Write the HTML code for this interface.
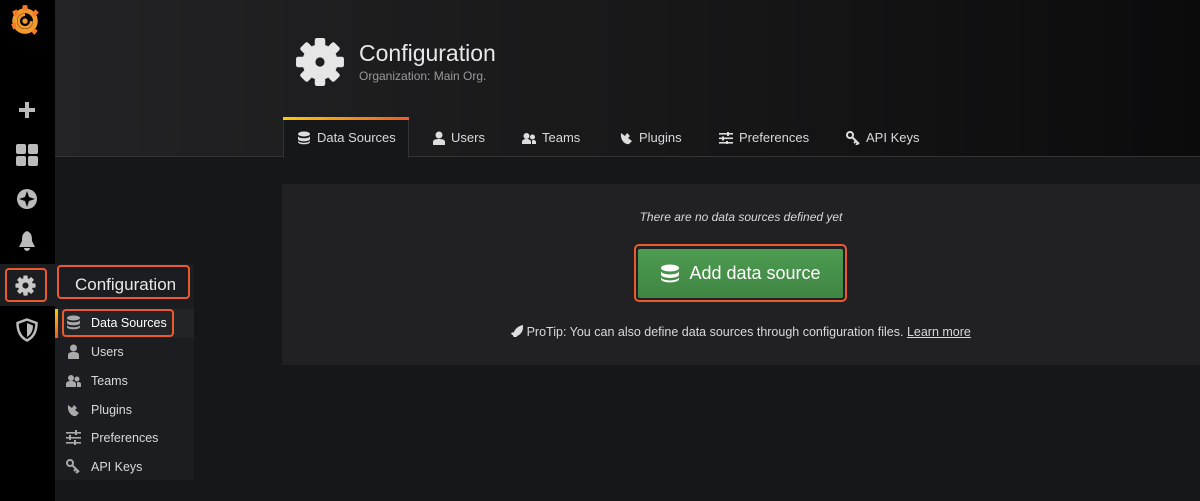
<!DOCTYPE html>
<html><head><style>
*{margin:0;padding:0;box-sizing:border-box}
body{width:1200px;height:501px;overflow:hidden;background:#161719;font-family:"Liberation Sans",sans-serif;position:relative;color:#d8d9da}
.abs{position:absolute}
.side{left:0;top:0;width:55px;height:501px;background:#000}
.head{left:55px;top:0;width:1145px;height:157px;background:linear-gradient(90deg,#232325,#161617 60%,#0b0b0c);border-bottom:1px solid #333}
.tab{top:130px;font-size:13px;color:#d8d9da;display:flex;align-items:center;gap:6px}
.panel{left:282px;top:184px;width:918px;height:181px;background:#212124}
.menu{left:55px;top:264px;width:139px;height:216px;background:#1c1d20}
.mi{left:66px;font-size:12.5px;color:#d8d9da;display:flex;align-items:center;gap:10px}
.box{border:2px solid #eb5a2d;border-radius:4px}
</style></head><body>
<svg width="0" height="0" style="position:absolute"><defs>
<g id="gear"><circle cx="12" cy="12" r="8.5"/><g><rect x="9.5" y="0.5" width="5" height="23" rx="1"/><rect x="9.5" y="0.5" width="5" height="23" rx="1" transform="rotate(45 12 12)"/><rect x="9.5" y="0.5" width="5" height="23" rx="1" transform="rotate(90 12 12)"/><rect x="9.5" y="0.5" width="5" height="23" rx="1" transform="rotate(135 12 12)"/></g></g>
</defs></svg>
<div class="abs side"></div>
<div class="abs head"></div>
<!-- logo -->
<svg class="abs" style="left:8px;top:3px" width="34" height="34" viewBox="0 0 32 32"><circle cx="16" cy="17" r="12" fill="#f2992e"/><g fill="#f47a2a"><path d="M14 2l4 0 1 5-6 0z"/><path d="M26 6l3 3-4 4-3-3z"/><path d="M4 8l4-2 2 5-4 2z"/><path d="M3 20l4-2 1 5-3 2z"/><path d="M25 24l3 2-3 4-3-3z"/></g><circle cx="16" cy="17" r="7.5" fill="#000"/><path d="M16 11a6 6 0 1 0 6 6" fill="none" stroke="#f2992e" stroke-width="2.5"/><circle cx="16" cy="17" r="2.5" fill="#f2992e"/></svg>
<!-- sidebar icons -->
<svg class="abs" style="left:17px;top:100px" width="20" height="20"><rect x="8" y="2" width="4" height="16" fill="#bbb"/><rect x="2" y="8" width="16" height="4" fill="#bbb"/></svg>
<svg class="abs" style="left:15px;top:143px" width="24" height="24"><g fill="#bbb"><rect x="1" y="1" width="10" height="10" rx="2"/><rect x="13" y="1" width="10" height="10" rx="2"/><rect x="1" y="13" width="10" height="10" rx="2"/><rect x="13" y="13" width="10" height="10" rx="2"/></g></svg>
<svg class="abs" style="left:16px;top:188px" width="22" height="22"><circle cx="11" cy="11" r="10" fill="#bbb"/><path d="M11 3L13 9L19 11L13 13L11 19L9 13L3 11L9 9Z" fill="#000"/></svg>
<svg class="abs" style="left:17px;top:230px" width="20" height="22"><path d="M10 1C5 3 5 7 5 11L2 17H18L15 11C15 7 15 3 10 1Z M7 18A3 3 0 0 0 13 18Z" fill="#bbb"/></svg>
<div class="abs" style="left:0;top:264px;width:55px;height:42px;background:#1c1d20"></div>
<div class="abs box" style="left:5px;top:268px;width:42px;height:34px"></div>
<svg class="abs" style="left:15px;top:275px" width="21" height="21" viewBox="0 0 24 24"><use href="#gear" fill="#c8c8c8"/><circle cx="12" cy="12" r="3.5" fill="#1c1d20"/></svg>
<svg class="abs" style="left:16px;top:318px" width="22" height="24" viewBox="0 0 22 24"><path d="M11 1.5L20.5 5C20.5 14 17 19.5 11 22.5C5 19.5 1.5 14 1.5 5Z" fill="none" stroke="#bbb" stroke-width="2.5"/><path d="M11 5L17 7.5C17 14 14 17 11 19Z" fill="#bbb"/></svg>
<!-- menu -->
<div class="abs menu"></div>
<div class="abs box" style="left:57px;top:265px;width:133px;height:34px"></div>
<div class="abs" style="left:75px;top:275px;font-size:17px;color:#e8e8e8">Configuration</div>
<div class="abs" style="left:55px;top:309px;width:3px;height:29px;background:linear-gradient(#fbca0a,#f05a28)"></div>
<div class="abs" style="left:58px;top:309px;width:136px;height:29px;background:#232428"></div>
<div class="abs box" style="left:62px;top:309px;width:112px;height:28px"></div>
<div class="abs mi" style="top:315px">
<svg width="15" height="15"><g fill="#aaa"><ellipse cx="7.5" cy="3" rx="6.5" ry="2.5"/><path d="M1 5c0 3 13 3 13 0v3c0 3-13 3-13 0z"/><path d="M1 10c0 3 13 3 13 0v2c0 3-13 3-13 0z"/></g></svg><span style="color:#fff">Data Sources</span></div>
<div class="abs mi" style="top:344px"><svg width="15" height="15"><circle cx="7.5" cy="4" r="3.5" fill="#aaa"/><path d="M2 15v-4c0-2 2-3 5.5-3s5.5 1 5.5 3v4z" fill="#aaa"/></svg>Users</div>
<div class="abs mi" style="top:373px"><svg width="15" height="15"><circle cx="5" cy="5" r="3" fill="#aaa"/><circle cx="11" cy="6" r="2.5" fill="#aaa"/><path d="M0 14v-3c0-2 2-3 5-3s5 1 5 3v3zM11 14v-3c0-1 0-2 1-2 2 0 3 1 3 2v3z" fill="#aaa"/></svg>Teams</div>
<div class="abs mi" style="top:402px"><svg width="15" height="15"><path d="M2 3l4 3 2-3 3 3-2 2 4 3-3 3C6 15 1 10 2 3z" fill="#aaa"/></svg>Plugins</div>
<div class="abs mi" style="top:430px"><svg width="15" height="15"><g fill="#aaa"><rect x="0" y="2" width="15" height="1.6"/><rect x="0" y="7" width="15" height="1.6"/><rect x="0" y="12" width="15" height="1.6"/><rect x="9" y="0" width="2" height="5"/><rect x="3" y="5" width="2" height="5"/><rect x="8" y="10" width="2" height="5"/></g></svg>Preferences</div>
<div class="abs mi" style="top:459px"><svg width="15" height="15"><circle cx="4" cy="4" r="3" fill="none" stroke="#aaa" stroke-width="2"/><path d="M6 6l7 7M10 10l-2 2M12 12l-2 2" stroke="#aaa" stroke-width="2"/></svg>API Keys</div>
<!-- page header -->
<svg class="abs" style="left:295px;top:37px" width="50" height="50" viewBox="0 0 24 24"><use href="#gear" fill="#e6e6e6"/><circle cx="12" cy="12" r="2.2" fill="#1e1e20"/></svg>
<div class="abs" style="left:359px;top:40px;font-size:23px;color:#e8e8e8">Configuration</div>
<div class="abs" style="left:359px;top:69px;font-size:12px;color:#9a9a9a">Organization: Main Org.</div>
<!-- tabs -->
<div class="abs" style="left:283px;top:118px;width:126px;height:40px;background:#161719;border:1px solid #333;border-bottom:none"></div>
<div class="abs" style="left:283px;top:117px;width:126px;height:3px;background:linear-gradient(90deg,#fbca0a,#f05a28)"></div>
<div class="abs tab" style="left:297px"><svg width="14" height="14"><g fill="#ddd"><ellipse cx="7" cy="3" rx="6" ry="2.5"/><path d="M1 5c0 3 12 3 12 0v3c0 3-12 3-12 0z"/><path d="M1 9.5c0 3 12 3 12 0v1.5c0 3-12 3-12 0z"/></g></svg>Data Sources</div>
<div class="abs tab" style="left:433px"><svg width="12" height="14"><circle cx="6" cy="4" r="3.5" fill="#ddd"/><path d="M0 14v-3c0-2 2-3 6-3s6 1 6 3v3z" fill="#ddd"/></svg>Users</div>
<div class="abs tab" style="left:522px"><svg width="14" height="12"><circle cx="4.5" cy="4" r="3" fill="#ddd"/><circle cx="10.5" cy="5" r="2.5" fill="#ddd"/><path d="M0 12v-2c0-2 2-3 4.5-3s4.5 1 4.5 3v2zM10 12v-3c0-1 1-1 2-1s2 1 2 2v2z" fill="#ddd"/></svg>Teams</div>
<div class="abs tab" style="left:619px"><svg width="14" height="14"><path d="M2 2l4 3 2-3 3 3-2 2 4 3-3 3C6 14 1 9 2 2z" fill="#ddd"/></svg>Plugins</div>
<div class="abs tab" style="left:719px"><svg width="14" height="12"><g fill="#ddd"><rect y="1" width="14" height="1.6"/><rect y="5.5" width="14" height="1.6"/><rect y="10" width="14" height="1.6"/><rect x="8" y="0" width="2" height="4"/><rect x="3" y="4.5" width="2" height="4"/><rect x="7" y="9" width="2" height="3"/></g></svg>Preferences</div>
<div class="abs tab" style="left:846px"><svg width="14" height="14"><circle cx="4" cy="4" r="3" fill="none" stroke="#ddd" stroke-width="2"/><path d="M6 6l7 7M10 10l-2 2M12 12l-2 2" stroke="#ddd" stroke-width="2"/></svg>API Keys</div>
<!-- panel -->
<div class="abs panel"></div>
<div class="abs" style="left:282px;top:210px;width:918px;text-align:center;font-size:12px;font-style:italic;color:#d8d9da">There are no data sources defined yet</div>
<div class="abs box" style="left:634px;top:244px;width:213px;height:58px;border-radius:5px"></div>
<div class="abs" style="left:638px;top:249px;width:205px;height:49px;background:linear-gradient(#4e9c52,#3f8543);border-radius:2px;display:flex;align-items:center;justify-content:center;gap:9px;font-size:18px;color:#fff">
<svg width="20" height="20"><g fill="#fff"><ellipse cx="10" cy="4" rx="9" ry="3.5"/><path d="M1 7c0 4.5 18 4.5 18 0v3.5c0 4.5-18 4.5-18 0z"/><path d="M1 13c0 4.5 18 4.5 18 0v2c0 4.5-18 4.5-18 0z"/></g></svg>Add data source</div>
<div class="abs" style="left:282px;top:325px;width:918px;text-align:center;font-size:12.5px;color:#d8d9da"><svg width="12" height="12" style="vertical-align:-1px"><path d="M12 0C7 1 4 4 3 7L0 8l1 2 1 0 0 1 1 1 0 1 2 1 1-3c3-1 6-4 6-9z" fill="#ddd"/></svg> ProTip: You can also define data sources through configuration files. <u>Learn more</u></div>
</body></html>
